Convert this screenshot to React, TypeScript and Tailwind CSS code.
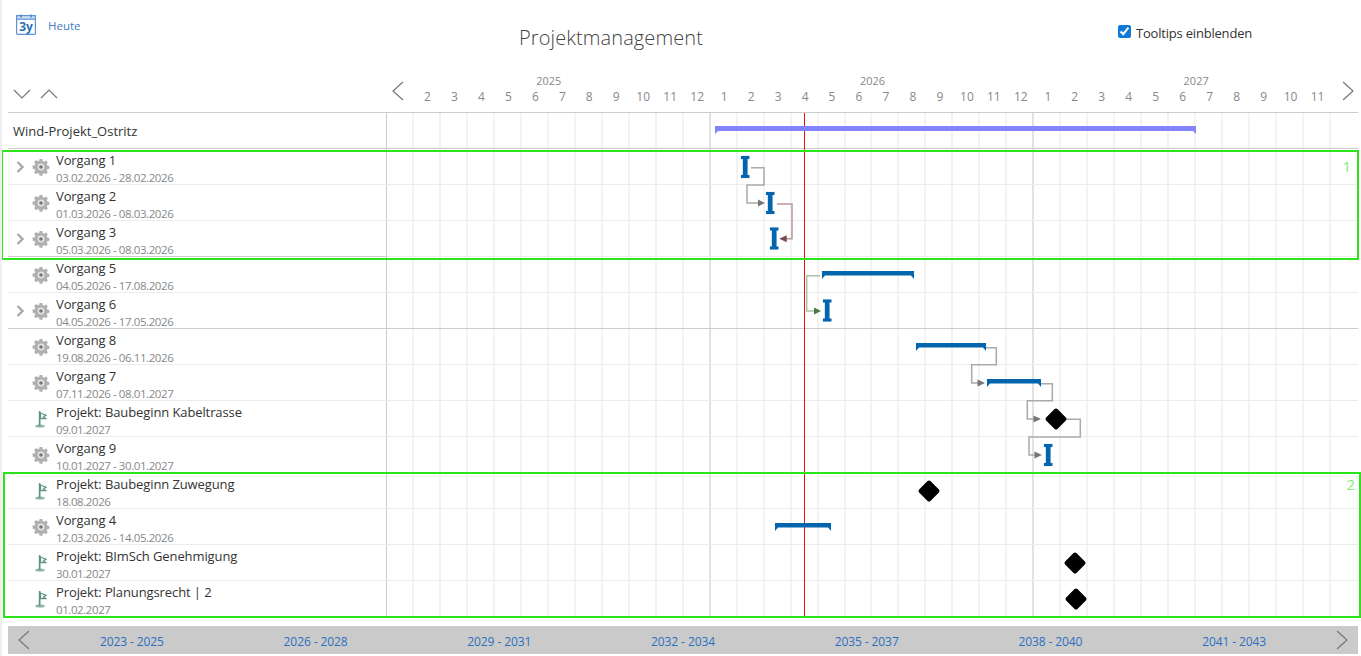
const months = Array.from({ length: 36 }, (_, i) => (i % 12) + 1)

const tasks = [
  { name: 'Vorgang 1', date: '03.02.2026 - 28.02.2026', icon: 'gear', expand: true },
  { name: 'Vorgang 2', date: '01.03.2026 - 08.03.2026', icon: 'gear' },
  { name: 'Vorgang 3', date: '05.03.2026 - 08.03.2026', icon: 'gear', expand: true, leftLine: true },
  { name: 'Vorgang 5', date: '04.05.2026 - 17.08.2026', icon: 'gear' },
  { name: 'Vorgang 6', date: '04.05.2026 - 17.05.2026', icon: 'gear', expand: true, dark: true },
  { name: 'Vorgang 8', date: '19.08.2026 - 06.11.2026', icon: 'gear' },
  { name: 'Vorgang 7', date: '07.11.2026 - 08.01.2027', icon: 'gear' },
  { name: 'Projekt: Baubeginn Kabeltrasse', date: '09.01.2027', icon: 'flag' },
  { name: 'Vorgang 9', date: '10.01.2027 - 30.01.2027', icon: 'gear' },
  { name: 'Projekt: Baubeginn Zuwegung', date: '18.08.2026', icon: 'flag' },
  { name: 'Vorgang 4', date: '12.03.2026 - 14.05.2026', icon: 'gear' },
  { name: 'Projekt: BImSch Genehmigung', date: '30.01.2027', icon: 'flag' },
  { name: 'Projekt: Planungsrecht | 2', date: '01.02.2027', icon: 'flag' },
]

const ranges = ['2023 - 2025', '2026 - 2028', '2029 - 2031', '2032 - 2034', '2035 - 2037', '2038 - 2040', '2041 - 2043']

function Chevron({ dir, className }: { dir: 'left' | 'right' | 'up' | 'down'; className?: string }) {
  const d = {
    left: 'M12 1 L2 10 L12 19',
    right: 'M2 1 L12 10 L2 19',
    up: 'M1 10 L9 2 L17 10',
    down: 'M1 2 L9 10 L17 2',
  }[dir]
  const box = dir === 'left' || dir === 'right' ? '0 0 14 20' : '0 0 18 12'
  return (
    <svg viewBox={box} className={className} fill="none" stroke="#777" strokeWidth="1.2">
      <path d={d} />
    </svg>
  )
}

function Gear() {
  return (
    <svg viewBox="0 0 18 18" className="w-[18px] h-[18px] shrink-0">
      <path
        fill="#b0b0b0"
        d="M7.6 1h2.8l.4 2.1 1.3.6 1.8-1.2 2 2-1.2 1.8.6 1.3 2.1.4v2.8l-2.1.4-.6 1.3 1.2 1.8-2 2-1.8-1.2-1.3.6-.4 2.1H7.6l-.4-2.1-1.3-.6-1.8 1.2-2-2 1.2-1.8-.6-1.3L.6 10.4V7.6l2.1-.4.6-1.3-1.2-1.8 2-2 1.8 1.2 1.3-.6z"
      />
      <circle cx="9" cy="9" r="3.4" fill="#e4e4e4" />
      <circle cx="9" cy="9" r="1.8" fill="#777" />
    </svg>
  )
}

function Flag() {
  return (
    <svg viewBox="0 0 12 18" className="w-3 h-[18px] shrink-0">
      <ellipse cx="5" cy="16" rx="4.8" ry="1.6" fill="#8fb5a8" />
      <rect x="3.8" y="1" width="1.7" height="15" fill="#5f9484" />
      <path d="M5.4 3 L11 5.2 L8.6 6.5 L10.6 8.5 L5.4 8.5 Z" fill="none" stroke="#5f9484" strokeWidth="1.3" />
    </svg>
  )
}

function GridCells() {
  return (
    <div className="flex-1 grid grid-cols-[repeat(36,1fr)]">
      {months.map((_, i) => (
        <div
          key={i}
          className={i === 11 || i === 23 ? 'border-r-2 border-[#e2e2e2]' : i === 35 ? '' : 'border-r-2 border-[#f3f3f3]'}
        />
      ))}
    </div>
  )
}

function TaskBar({ x1, x2, y }: { x1: number; x2: number; y: number }) {
  return (
    <polygon
      fill="#0564ae"
      points={`${x1},${y} ${x2},${y} ${x2},${y + 8} ${x2 - 3},${y + 4.5} ${x1 + 3},${y + 4.5} ${x1},${y + 8}`}
    />
  )
}

function ShortTask({ x, y }: { x: number; y: number }) {
  return (
    <path
      fill="#0564ae"
      stroke="#cfe4f5"
      strokeWidth="0.8"
      paintOrder="stroke"
      d={`M${x} ${y}h8.4v3h-1.9v16h1.9v3h-8.4v-3h1.9v-16h-1.9z`}
    />
  )
}

function Milestone({ x, y }: { x: number; y: number }) {
  return (
    <rect x={x - 8} y={y - 8} width="16" height="16" rx="2" fill="#000" transform={`rotate(45 ${x} ${y})`} />
  )
}

function Link({ d, line = '#aaa', head = '#777', arrow }: { d: string; line?: string; head?: string; arrow: string }) {
  return (
    <>
      <path d={d} fill="none" stroke={line} strokeWidth="1.5" />
      <polygon points={arrow} fill={head} />
    </>
  )
}

function Chart() {
  return (
    <svg className="absolute left-[-2px] top-0 w-[1361px] h-[656px] pointer-events-none" viewBox="0 0 1361 656">
      <rect x="804" y="113" width="1" height="504" fill="#ee1111" />
      <polygon fill="#8383fb" points="715,126 1196,126 1196,134 1193,131 718,131 715,134" />

      <Link d="M751 167.7H764V185H747V203H758" arrow="758,199.5 765,203 758,206.5" />
      <Link d="M777 204H792V238.7H786" line="#b59a9a" head="#7a4a4a" arrow="786.7,235.2 779.3,238.7 786.7,242.2" />
      <Link d="M820 275.7H806.7V311H814" line="#aac4a6" head="#4a7a4a" arrow="814,307.5 821,311 814,314.5" />
      <Link d="M986 347.7H996.3V364.7H971.7V383H978" arrow="977.5,379.5 985,383 977.5,386.5" />
      <Link d="M1041 383.7H1052.3V400.7H1027.3V419H1034" arrow="1033.5,415.5 1041,419 1033.5,422.5" />
      <Link d="M1066 419.3H1080.3V437H1029V455H1035" arrow="1034.5,451.5 1042,455 1034.5,458.5" />

      <ShortTask x={741} y={156} />
      <ShortTask x={766} y={192} />
      <ShortTask x={770} y={227.5} />
      <ShortTask x={823} y={299.5} />
      <ShortTask x={1044} y={444} />

      <TaskBar x1={822} x2={914} y={271} />
      <TaskBar x1={916} x2={986} y={343} />
      <TaskBar x1={987} x2={1041} y={379} />
      <TaskBar x1={775} x2={831} y={523} />

      <Milestone x={1056} y={419} />
      <Milestone x={929} y={491} />
      <Milestone x={1075} y={563} />
      <Milestone x={1076} y={599} />
    </svg>
  )
}

export default function App() {
  return (
    <div className="relative w-[1361px] h-[656px] overflow-hidden bg-white border-l-2 border-[#efefef] font-['Open_Sans',sans-serif] text-[#333]">
      {/* Toolbar */}
      <div className="h-[70px] flex items-start">
        <div className="w-[280px] pl-[14px] pt-[14px] flex items-start gap-3">
          <svg viewBox="0 0 20 21" className="w-5 h-[21px]">
            <rect x="0.6" y="1.6" width="18.8" height="18.8" rx="1" fill="none" stroke="#5b93d6" strokeWidth="1.2" />
            <rect x="0.6" y="1.6" width="18.8" height="3.6" fill="#cfe0f4" stroke="#5b93d6" strokeWidth="1.2" />
            <rect x="4" y="0.5" width="2" height="3" fill="#5b93d6" />
            <rect x="14" y="0.5" width="2" height="3" fill="#5b93d6" />
            <text x="10" y="17" textAnchor="middle" fontSize="12" fontWeight="700" fill="#2f6fb8" fontFamily="Open Sans">3y</text>
          </svg>
          <span className="text-[11.5px] leading-[23px] text-[#3f7cc4]">Heute</span>
        </div>
        <div className="w-[658px] pt-[22px] text-center text-[20px] leading-8 font-light text-[#444] tracking-[0.1px]">Projektmanagement</div>
        <label className="ml-[178px] pt-[24px] flex items-center gap-[5px] text-[13px] leading-[18px] tracking-[-0.2px]">
          <input type="checkbox" defaultChecked className="w-[13px] h-[13px] accent-[#0f7ad8] m-0 mb-[3px]" />
          Tooltips einblenden
        </label>
      </div>

      <div className="pl-[6px] pr-[3px]">
        {/* Timeline header */}
        <div className="h-[43px] flex border-b border-[#ccc]">
          <div className="w-[379px] flex items-end pl-[5px] pb-[12px] gap-[9px]">
            <Chevron dir="down" className="w-[18px] h-3" />
            <Chevron dir="up" className="w-[18px] h-3" />
          </div>
          <div className="relative flex-1">
            <div className="grid grid-cols-3 h-5 text-[11px] leading-[21px] text-[#888] text-center">
              <span>2025</span>
              <span>2026</span>
              <span>2027</span>
            </div>
            <div className="grid grid-cols-[repeat(36,1fr)] text-[12px] leading-[14px] text-[#888] text-center">
              {months.map((m, i) => (
                <span key={i} className={i === 0 || i === 35 ? 'invisible' : ''}>{m}</span>
              ))}
            </div>
            <Chevron dir="left" className="absolute left-[4px] top-[11px] w-[14px] h-5" />
            <Chevron dir="right" className="absolute right-[3px] top-[11px] w-[14px] h-5" />
          </div>
        </div>

        {/* Project row */}
        <div className="h-9 flex border-b border-[#ccc]">
          <div className="w-[379px] border-r border-[#ccc] pl-[5px] text-[13px] leading-[37px]">Wind-Projekt_Ostritz</div>
          <GridCells />
        </div>

        {/* Task rows */}
        {tasks.map((t) => (
          <div key={t.name} className={`h-9 flex border-b ${t.dark ? 'border-[#ccc]' : 'border-[#ececec]'}`}>
            <div className={`w-[379px] shrink-0 border-r border-[#ccc] flex items-center ${t.leftLine ? 'border-b -mb-px' : ''}`}>
              <div className="w-4 flex justify-end">
                {t.expand && (
                  <svg viewBox="0 0 8 12" className="w-2 h-3" fill="none" stroke="#aaa" strokeWidth="2.4">
                    <path d="M1.5 1 L6.5 6 L1.5 11" />
                  </svg>
                )}
              </div>
              <div className="w-8 pl-[2px] flex justify-center">{t.icon === 'gear' ? <Gear /> : <Flag />}</div>
              <div className="self-start pt-[3px]">
                <div className="text-[13px] leading-[17px] tracking-[-0.1px]">{t.name}</div>
                <div className="text-[11.5px] leading-[17px] tracking-[-0.42px] text-[#888]">{t.date}</div>
              </div>
            </div>
            <GridCells />
          </div>
        ))}

        {/* Range navigation */}
        <div className="mt-[9px] h-7 flex items-center bg-[#cacaca]">
          <div className="w-8 flex justify-center">
            <Chevron dir="left" className="w-[14px] h-5" />
          </div>
          <div className="flex-1 pt-1 grid grid-cols-7 text-center text-[12px] tracking-[-0.1px] text-[#2a70c0]">
            {ranges.map((r) => (
              <span key={r}>{r}</span>
            ))}
          </div>
          <div className="w-8 flex justify-center">
            <Chevron dir="right" className="w-[14px] h-5" />
          </div>
        </div>
      </div>

      <Chart />

      {/* Highlight frames */}
      <div className="absolute left-[-1px] top-[150px] w-[1358px] h-[110px] border-2 border-[#2de31a]">
        <span className="absolute right-[6px] top-[4px] text-[15px] leading-5 text-[#84ee76]">1</span>
      </div>
      <div className="absolute left-[1px] top-[472px] w-[1358px] h-[146px] border-2 border-[#2de31a]">
        <span className="absolute right-[4px] top-0 text-[15px] leading-5 text-[#84ee76]">2</span>
      </div>
    </div>
  )
}
